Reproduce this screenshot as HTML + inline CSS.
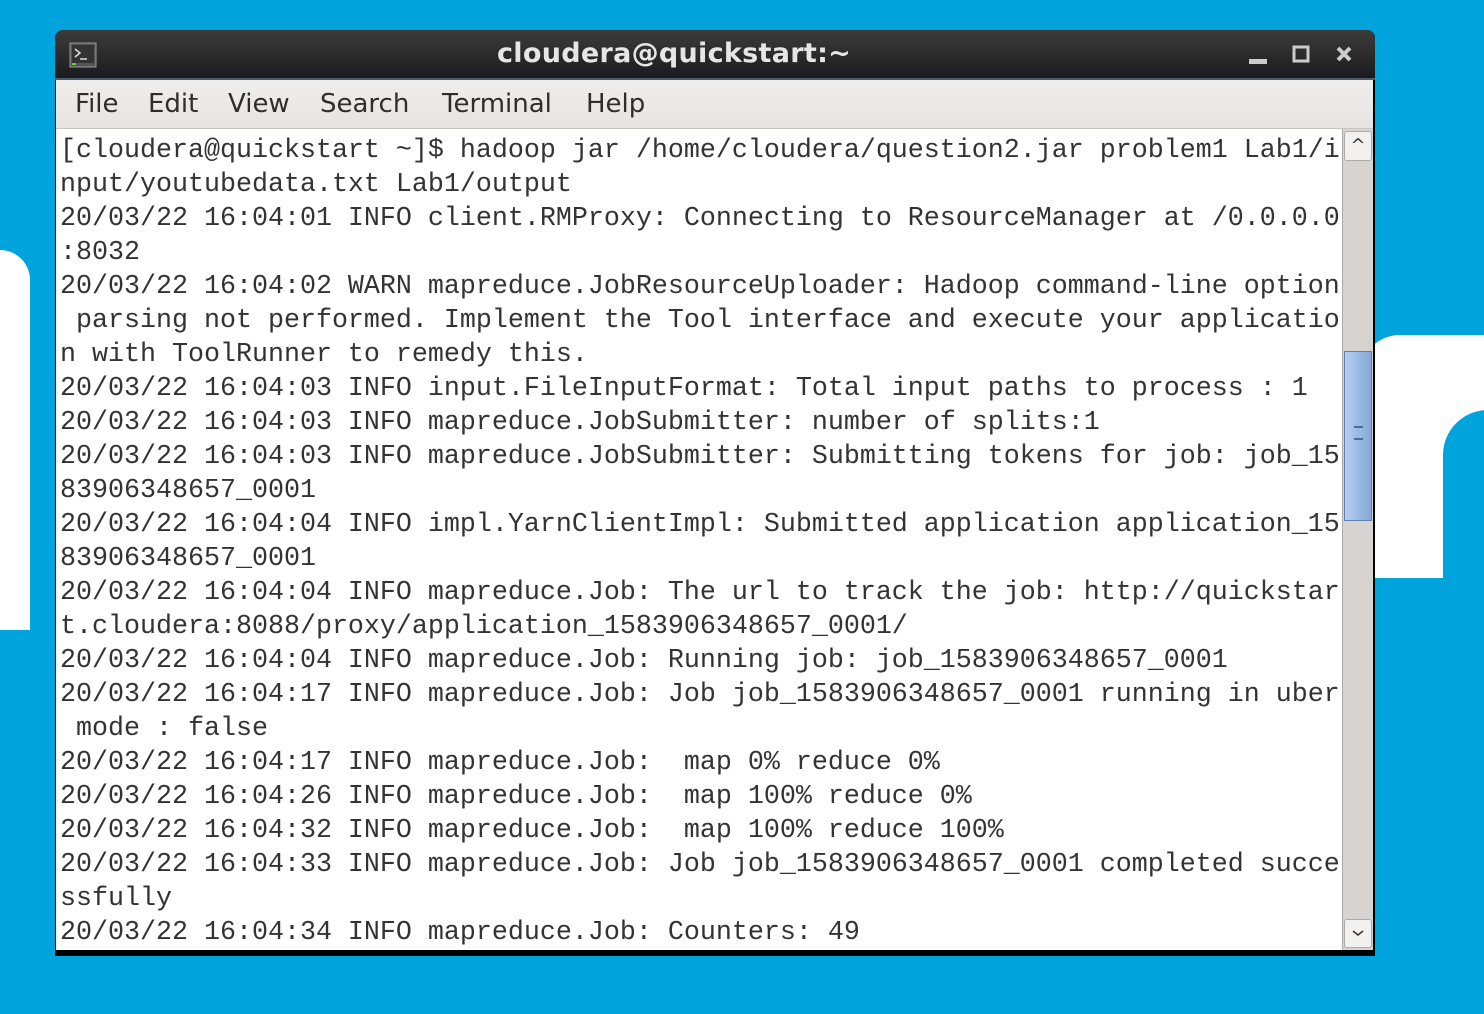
<!DOCTYPE html>
<html><head><style>
body{margin:0;width:1484px;height:1014px;background:#00a3dc;position:relative;overflow:hidden;font-family:"DejaVu Sans",sans-serif}
.w{position:absolute;background:#fff}
#win{position:absolute;left:55px;top:30px;width:1320px;height:926px;background:#000;border-radius:8px 8px 0 0;overflow:hidden}
#tb{position:absolute;left:0;top:0;width:1320px;height:50px;background:linear-gradient(#3c3c3c,#1b1b1b);color:#e6e6e6;font-weight:bold;font-size:27px;line-height:48px;border-bottom:2px solid #4a5a70;box-sizing:border-box}
#mb{position:absolute;left:1px;top:50px;width:1317px;height:48px;background:linear-gradient(#efeeec,#e6e4e1);border-bottom:1px solid #c9c6c2;font-size:26px;color:#2e2e2e;line-height:48px}
#mb span{position:absolute;top:0}
#tm{position:absolute;left:1px;top:99px;width:1286px;height:821px;background:#fff;font-family:"Liberation Mono",monospace;font-size:26.67px;line-height:34px;color:#333;white-space:pre;padding-left:4px;padding-top:5px;box-sizing:border-box}
#sb{position:absolute;left:1287px;top:99px;width:30px;height:821px;background:#d6d3d0;border-left:1px solid #aaa}
</style></head><body>
<div class="w" style="left:-20px;top:250px;width:50px;height:380px;border-radius:0 30px 0 0"></div>
<div class="w" style="left:1360px;top:335px;width:140px;height:243px;border-radius:40px 0 0 0"></div>
<div style="position:absolute;left:1443px;top:410px;width:80px;height:200px;background:#00a3dc;border-radius:45px 0 0 0"></div>
<div id="win">
<div id="tb"><span style="position:absolute;left:442px;top:0;letter-spacing:0.3px">cloudera@quickstart:~</span>
<svg style="position:absolute;left:14px;top:12px" width="28" height="26"><rect x="1" y="1" width="26" height="24" fill="#555" stroke="#999"/><rect x="3" y="3" width="22" height="18" fill="#333"/><path d="M6 7l5 4-5 4M11 17h7" stroke="#ddd" fill="none" stroke-width="1.5"/><rect x="3" y="21" width="4" height="2" fill="#6c3"/></svg>
<svg style="position:absolute;left:1190px;top:14px" width="110" height="24"><rect x="4" y="15" width="18" height="5" fill="#ccc"/><rect x="49" y="3" width="14" height="14" fill="none" stroke="#ccc" stroke-width="3"/><path d="M93 4l12 12M105 4l-12 12" stroke="#ccc" stroke-width="4"/></svg>
</div>
<div id="mb"><span style="left:19px">File</span><span style="left:92px">Edit</span><span style="left:172px">View</span><span style="left:264px">Search</span><span style="left:386px">Terminal</span><span style="left:530px">Help</span></div>
<div id="tm">[cloudera@quickstart ~]$ hadoop jar /home/cloudera/question2.jar problem1 Lab1/i
nput/youtubedata.txt Lab1/output
20/03/22 16:04:01 INFO client.RMProxy: Connecting to ResourceManager at /0.0.0.0
:8032
20/03/22 16:04:02 WARN mapreduce.JobResourceUploader: Hadoop command-line option
 parsing not performed. Implement the Tool interface and execute your applicatio
n with ToolRunner to remedy this.
20/03/22 16:04:03 INFO input.FileInputFormat: Total input paths to process : 1
20/03/22 16:04:03 INFO mapreduce.JobSubmitter: number of splits:1
20/03/22 16:04:03 INFO mapreduce.JobSubmitter: Submitting tokens for job: job_15
83906348657_0001
20/03/22 16:04:04 INFO impl.YarnClientImpl: Submitted application application_15
83906348657_0001
20/03/22 16:04:04 INFO mapreduce.Job: The url to track the job: http://quickstar
t.cloudera:8088/proxy/application_1583906348657_0001/
20/03/22 16:04:04 INFO mapreduce.Job: Running job: job_1583906348657_0001
20/03/22 16:04:17 INFO mapreduce.Job: Job job_1583906348657_0001 running in uber
 mode : false
20/03/22 16:04:17 INFO mapreduce.Job:  map 0% reduce 0%
20/03/22 16:04:26 INFO mapreduce.Job:  map 100% reduce 0%
20/03/22 16:04:32 INFO mapreduce.Job:  map 100% reduce 100%
20/03/22 16:04:33 INFO mapreduce.Job: Job job_1583906348657_0001 completed succe
ssfully
20/03/22 16:04:34 INFO mapreduce.Job: Counters: 49</div>
<div id="sb">
<div style="position:absolute;left:1px;top:2px;width:26px;height:28px;background:#f2f1f0;border:1px solid #aaa;border-radius:3px;text-align:center;font-size:18px;line-height:28px;color:#333">^</div>
<div style="position:absolute;left:1px;top:222px;width:26px;height:168px;background:linear-gradient(90deg,#b3cdee,#86a8d8);border:1px solid #5f7fae"><div style="position:absolute;left:9px;top:74px;width:9px;height:10px;border-top:2px solid #4a6a9a;border-bottom:2px solid #4a6a9a"></div></div>
<div style="position:absolute;left:1px;top:790px;width:26px;height:27px;background:#f2f1f0;border:1px solid #aaa;border-radius:3px"><svg width="26" height="27"><path d="M8 11l5 4 5-4" stroke="#333" fill="none" stroke-width="1.5"/></svg></div>
</div>
</div>
</body></html>
